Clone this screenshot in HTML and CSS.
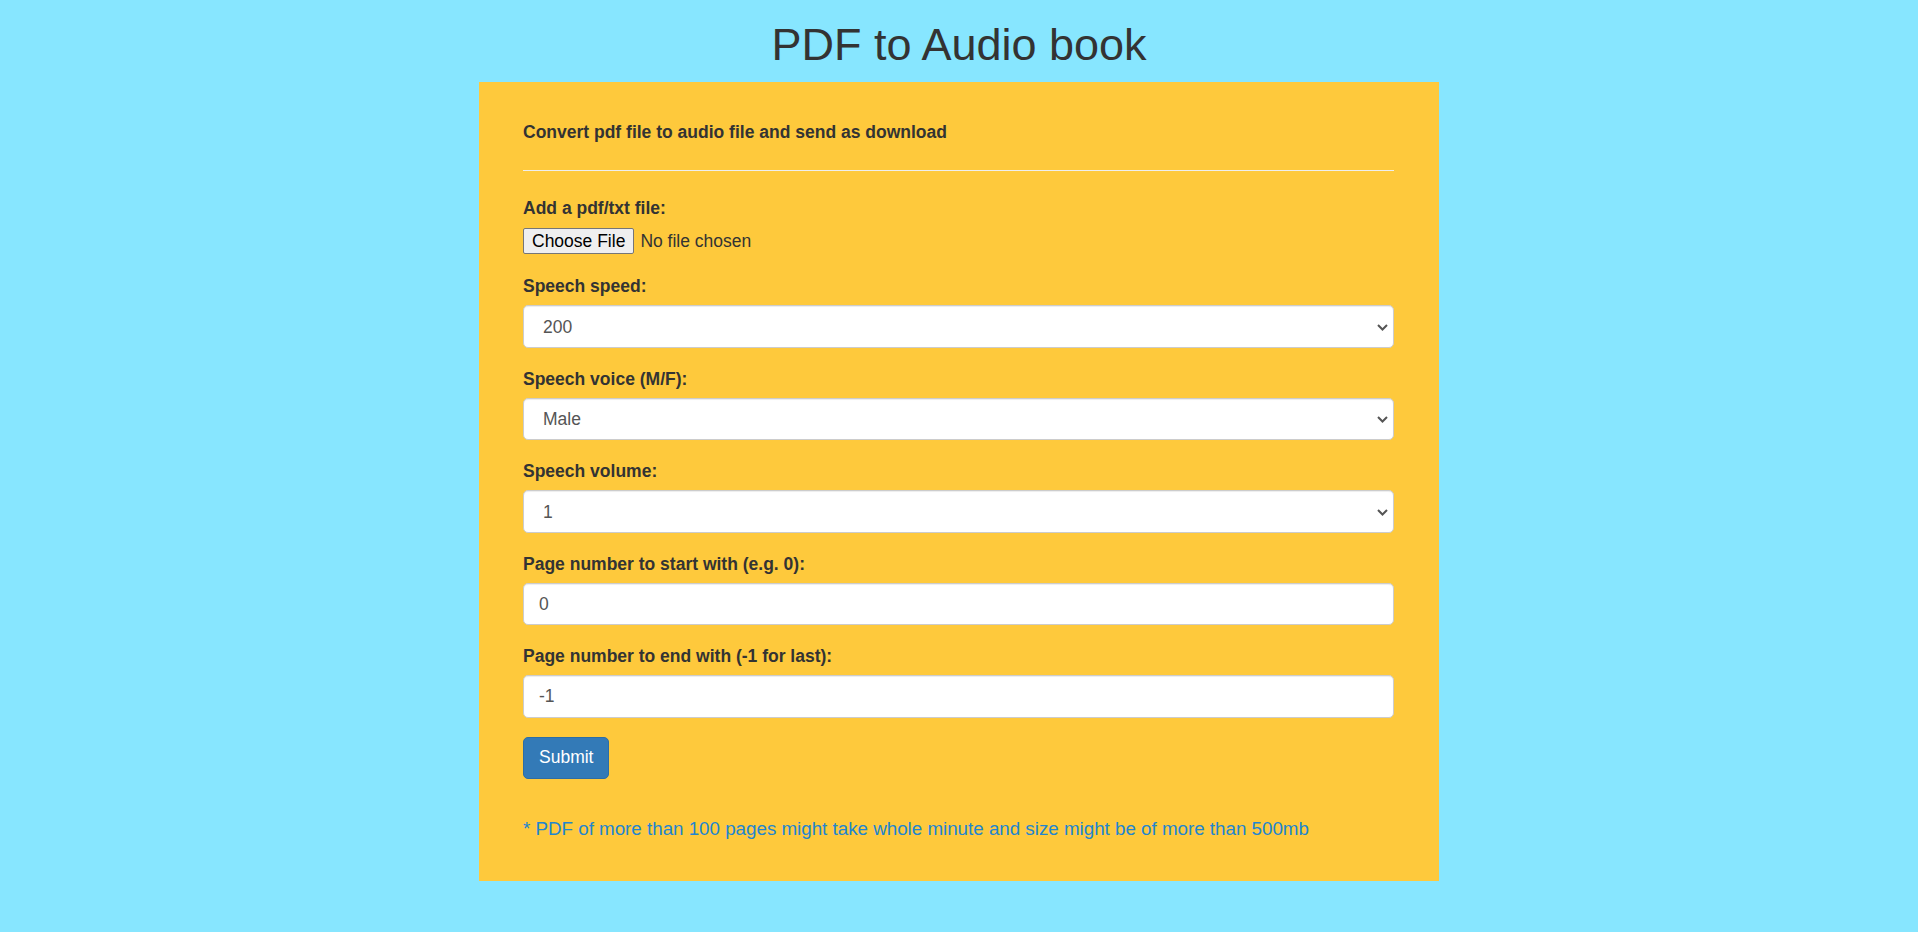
FILE: index.html
```html
<!DOCTYPE html>
<html lang="en">
<head>
<meta charset="utf-8">
<title>PDF to Audio book</title>
<link rel="stylesheet" href="styles.css">
</head>
<body>
<h1 class="title">PDF to Audio book</h1>
<div class="card">
  <p class="card-head">Convert pdf file to audio file and send as download</p>
  <hr class="divider">
  <form class="form">
    <div class="group">
      <label class="label" for="file">Add a pdf/txt file:</label>
      <input class="file" id="file" type="file">
    </div>
    <div class="group">
      <label class="label" for="speed">Speech speed:</label>
      <div class="select-wrap">
        <select class="control select" id="speed"><option>200</option></select>
        <svg class="chev" width="11" height="7" viewBox="0 0 11 7"><path d="M1 1 L5.5 5.5 L10 1" fill="none" stroke="#555" stroke-width="2"/></svg>
      </div>
    </div>
    <div class="group">
      <label class="label" for="voice">Speech voice (M/F):</label>
      <div class="select-wrap">
        <select class="control select" id="voice"><option>Male</option></select>
        <svg class="chev" width="11" height="7" viewBox="0 0 11 7"><path d="M1 1 L5.5 5.5 L10 1" fill="none" stroke="#555" stroke-width="2"/></svg>
      </div>
    </div>
    <div class="group">
      <label class="label" for="volume">Speech volume:</label>
      <div class="select-wrap">
        <select class="control select" id="volume"><option>1</option></select>
        <svg class="chev" width="11" height="7" viewBox="0 0 11 7"><path d="M1 1 L5.5 5.5 L10 1" fill="none" stroke="#555" stroke-width="2"/></svg>
      </div>
    </div>
    <div class="group">
      <label class="label" for="start">Page number to start with (e.g. 0):</label>
      <input class="control" id="start" type="text" value="0">
    </div>
    <div class="group">
      <label class="label" for="end">Page number to end with (-1 for last):</label>
      <input class="control" id="end" type="text" value="-1">
    </div>
    <div class="actions">
      <button class="btn" type="button">Submit</button>
    </div>
  </form>
  <p class="note">* PDF of more than 100 pages might take whole minute and size might be of more than 500mb</p>
</div>
</body>
</html>
```
FILE: styles.css
```css
html, body {
  margin: 0;
  padding: 0;
}
body {
  background: #87e6ff;
  font-family: "Liberation Sans", Arial, Helvetica, sans-serif;
  color: #333;
  font-size: 17.5px;
  line-height: 25px;
}
.title {
  margin: 20px 0 13px;
  font-size: 45px;
  line-height: 49px;
  font-weight: 400;
  text-align: center;
  color: #333;
}
.card {
  width: 960px;
  box-sizing: border-box;
  margin: 0 auto;
  background: #fec93c;
  padding: 38px 45px 39px 44px;
}
.card-head {
  margin: 0;
  font-weight: 700;
  line-height: 25px;
}
.divider {
  border: 0;
  border-top: 1px solid #eee;
  margin: 25px 0 25px;
  height: 0;
}
.form {
  margin: 0;
}
.group {
  display: flex;
  flex-direction: column;
  margin-bottom: 18.75px;
}
.label {
  font-weight: 700;
  line-height: 25px;
  margin-bottom: 6.25px;
}
.file {
  display: block;
  padding: 1px 0;
  font-family: "Liberation Sans", Arial, sans-serif;
  font-size: 17.5px;
  color: #333;
  height: 28px;
  box-sizing: border-box;
}
.file::file-selector-button {
  font: inherit;
  color: #000;
  height: 26px;
  padding: 0 8px;
  margin-right: 6px;
  border: 1px solid #767676;
  border-radius: 2px;
  background: #efefef;
}
.control {
  display: block;
  width: 100%;
  height: 42.5px;
  box-sizing: border-box;
  padding: 0 15px;
  font-family: "Liberation Sans", Arial, sans-serif;
  font-size: 17.5px;
  color: #555;
  background: #fff;
  border: 1px solid #ccc;
  border-radius: 5px;
  box-shadow: inset 0 1px 1px rgba(0, 0, 0, 0.075);
  outline: none;
}
.select-wrap {
  position: relative;
}
.select {
  appearance: none;
  -webkit-appearance: none;
  padding-left: 19px;
}
.chev {
  position: absolute;
  right: 6px;
  top: 50%;
  margin-top: -3px;
  pointer-events: none;
}
.actions {
  display: flex;
}
.btn {
  font-family: "Liberation Sans", Arial, sans-serif;
  font-size: 17.5px;
  line-height: 25px;
  color: #fff;
  background: #337ab7;
  border: 1px solid #2e6da4;
  border-radius: 5px;
  padding: 7.5px 15px;
  height: 42px;
  box-sizing: border-box;
  cursor: pointer;
}
.note {
  margin: 36.75px 0 0;
  font-size: 18.75px;
  line-height: 27px;
  color: #2185d0;
}
```
